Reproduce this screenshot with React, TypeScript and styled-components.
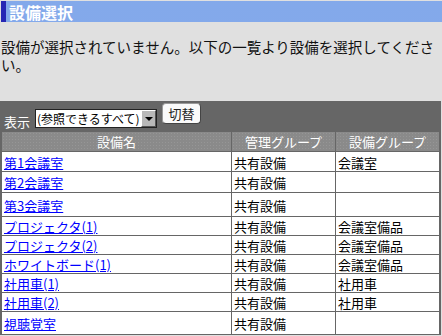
import React from 'react';
import styled, { createGlobalStyle } from 'styled-components';

const GlobalStyle = createGlobalStyle`
  html, body {
    margin: 0;
    padding: 0;
    background: #e0e0e0;
  }
  body {
    font-family: "Noto Sans CJK JP", "Liberation Sans", sans-serif;
  }
`;

const Page = styled.div`
  width: 442px;
  height: 336px;
  overflow: hidden;
  background: #e0e0e0;
`;

const TitleBar = styled.h1`
  margin: 1px 0 0 1px;
  height: 21px;
  display: flex;
  align-items: center;
  padding-left: 3px;
  border-left: 5px solid #2626b4;
  background-color: #7aa2e6;
  background-image: radial-gradient(#8db1ee 0.6px, transparent 0.8px);
  background-size: 2px 2px;
  color: #fff;
  font-size: 16px;
  font-weight: bold;
  line-height: 1;
`;

const Message = styled.p`
  margin: 16px 0 27px 1px;
  width: 441px;
  font-size: 14.5px;
  line-height: 18px;
  color: #111;
`;

const Panel = styled.div`
  width: 441px;
  box-sizing: border-box;
  background: #666666;
  padding: 0 2px 1px 2px;
`;

const Toolbar = styled.div`
  height: 31px;
  display: flex;
  align-items: flex-start;
  gap: 5px;
  padding-left: 2px;
`;

const ToolLabel = styled.span`
  margin-top: 14px;
  color: #fff;
  font-size: 13px;
  line-height: 14px;
`;

const SelectBox = styled.div`
  margin-top: 8px;
  width: 122px;
  height: 19px;
  box-sizing: border-box;
  display: flex;
  background: #fff;
  border: 1px solid #222;
`;

const SelectText = styled.span`
  flex: 1;
  font-size: 12px;
  line-height: 17px;
  color: #000;
  padding-left: 1px;
  white-space: nowrap;
  overflow: hidden;
`;

const SelectArrow = styled.span`
  width: 15px;
  box-sizing: border-box;
  display: flex;
  align-items: center;
  justify-content: center;
  background: #b8b8b8;
  border: 1px solid #fff;
  border-right-color: #555;
  border-bottom-color: #555;
  &::after {
    content: '';
    border-left: 4px solid transparent;
    border-right: 4px solid transparent;
    border-top: 4px solid #000;
  }
`;

const SwitchButton = styled.button`
  margin-top: 2px;
  width: 39px;
  height: 21px;
  padding: 0;
  background: #fafafa;
  border: 1px solid #9a9a9a;
  border-right-color: #444;
  border-bottom-color: #444;
  border-radius: 4px;
  font-family: inherit;
  font-size: 13px;
  line-height: 17px;
  color: #222;
`;

const Grid = styled.div`
  display: grid;
  grid-template-columns: 229px 103px 103px;
  gap: 1px;
`;

const HeadCell = styled.div`
  height: 19px;
  display: flex;
  align-items: center;
  justify-content: center;
  background-color: #8a8a8a;
  background-image: radial-gradient(#969696 0.6px, transparent 0.8px);
  background-size: 3px 3px;
  color: #fff;
  font-size: 13px;
`;

const Cell = styled.div<{ $h: number }>`
  height: ${(p) => p.$h}px;
  display: flex;
  align-items: center;
  padding: 1px 0 0 2px;
  box-sizing: border-box;
  background: #fff;
  color: #000;
  font-size: 13px;
  white-space: nowrap;
`;

const Link = styled.a`
  color: #0000ff;
  text-decoration: underline;
  cursor: pointer;
`;

const rows = [
  { name: '第1会議室', admin: '共有設備', group: '会議室', h: 19 },
  { name: '第2会議室', admin: '共有設備', group: '', h: 20 },
  { name: '第3会議室', admin: '共有設備', group: '', h: 23 },
  { name: 'プロジェクタ(1)', admin: '共有設備', group: '会議室備品', h: 18 },
  { name: 'プロジェクタ(2)', admin: '共有設備', group: '会議室備品', h: 18 },
  { name: 'ホワイトボード(1)', admin: '共有設備', group: '会議室備品', h: 18 },
  { name: '社用車(1)', admin: '共有設備', group: '社用車', h: 18 },
  { name: '社用車(2)', admin: '共有設備', group: '社用車', h: 18 },
  { name: '視聴覚室', admin: '共有設備', group: '', h: 22 },
];

export default function App() {
  return (
    <Page>
      <GlobalStyle />
      <TitleBar>設備選択</TitleBar>
      <Message>設備が選択されていません。以下の一覧より設備を選択してください。</Message>
      <Panel>
        <Toolbar>
          <ToolLabel>表示</ToolLabel>
          <SelectBox>
            <SelectText>(参照できるすべて)</SelectText>
            <SelectArrow />
          </SelectBox>
          <SwitchButton>切替</SwitchButton>
        </Toolbar>
        <Grid>
          <HeadCell>設備名</HeadCell>
          <HeadCell>管理グループ</HeadCell>
          <HeadCell>設備グループ</HeadCell>
          {rows.map((r) => (
            <React.Fragment key={r.name}>
              <Cell $h={r.h}>
                <Link>{r.name}</Link>
              </Cell>
              <Cell $h={r.h}>{r.admin}</Cell>
              <Cell $h={r.h}>{r.group}</Cell>
            </React.Fragment>
          ))}
        </Grid>
      </Panel>
    </Page>
  );
}
